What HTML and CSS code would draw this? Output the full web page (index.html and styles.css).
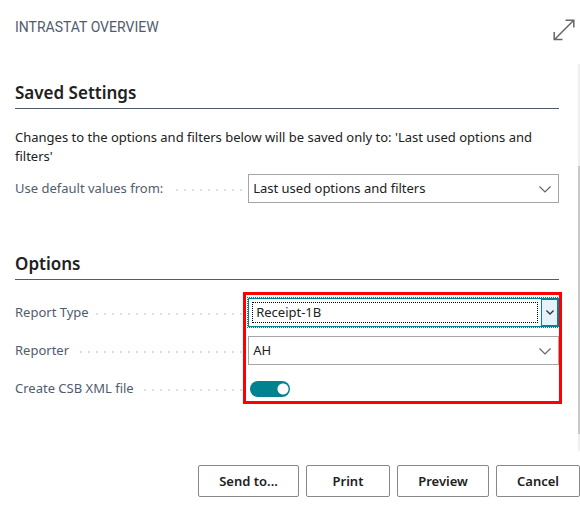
FILE: index.html
```html
<!DOCTYPE html>
<html lang="en">
<head>
<meta charset="utf-8">
<meta name="viewport" content="width=device-width, initial-scale=1">
<title>Intrastat Overview</title>
<link rel="stylesheet" href="styles.css">
</head>
<body>
<main class="dialog">
  <header class="header">
    <h1 class="title">INTRASTAT OVERVIEW</h1>
    <button class="expand" type="button" aria-label="Expand">
      <svg width="22" height="22" viewBox="0 0 22 22" fill="none" stroke="#666" stroke-width="1.5"><path d="M1.5 20.5L20.5 1.5M12.5 1.2H20.8V8.5M1.2 13V20.5H9.5"/></svg>
    </button>
  </header>

  <div class="content">
    <div class="sections">
      <section class="section">
        <h2 class="heading">Saved Settings</h2>
        <p class="note">Changes to the options and filters below will be saved only to: 'Last used options and filters'</p>
        <div class="field">
          <div class="leader"><label class="label" for="defaults">Use default values from:</label></div>
          <div class="control">
            <select class="select" id="defaults"><option>Last used options and filters</option></select>
            <svg class="chevron" width="12" height="7" viewBox="0 0 12 7" fill="none" stroke="#666" stroke-width="1.2"><path d="M.5 .5L6 6L11.500 .5"/></svg>
          </div>
        </div>
      </section>

      <section class="section">
        <h2 class="heading">Options</h2>
        <div class="fields">
          <div class="field">
            <div class="leader"><label class="label" for="type">Report Type</label></div>
            <div class="control active">
              <select class="select" id="type"><option>Receipt-1B</option></select>
              <span class="focus-ring"></span>
              <span class="drop"><svg width="8" height="5" viewBox="0 0 8 5" fill="none" stroke="#333" stroke-width="1.3"><path d="M.4 .5L4 4L7.600 .5"/></svg></span>
            </div>
          </div>
          <div class="field">
            <div class="leader"><label class="label" for="reporter">Reporter</label></div>
            <div class="control">
              <select class="select" id="reporter"><option>AH</option></select>
              <svg class="chevron" width="12" height="7" viewBox="0 0 12 7" fill="none" stroke="#666" stroke-width="1.2"><path d="M.5 .5L6 6L11.500 .5"/></svg>
            </div>
          </div>
          <div class="field">
            <div class="leader"><label class="label" for="xml">Create CSB XML file</label></div>
            <div class="control"><input class="toggle" id="xml" type="checkbox" role="switch" checked></div>
          </div>
          <div class="highlight"></div>
        </div>
      </section>
    </div>
    <div class="track"><div class="thumb"></div></div>
  </div>

  <footer class="actions">
    <button class="button wide" type="button">Send to...</button>
    <button class="button" type="button">Print</button>
    <button class="button medium" type="button">Preview</button>
    <button class="button" type="button">Cancel</button>
  </footer>
</main>
</body>
</html>
```
FILE: styles.css
```css
* {
  box-sizing: border-box;
}

body {
  margin: 0;
  background: #fff;
  color: #212121;
  font: 13px/19px "Noto Sans", "Open Sans", sans-serif;
}

.header {
  display: flex;
  justify-content: space-between;
  align-items: flex-start;
  height: 64px;
  padding: 18px 5px 0 15px;
}

.title {
  margin: 0;
  color: #505c6d;
  font: 400 14px/19px Roboto, sans-serif;
}

.expand {
  width: 22px;
  height: 24px;
  padding: 0;
  border: 0;
  background: none;
}

.expand svg {
  display: block;
}

.content {
  display: flex;
}

.sections {
  flex: 1;
  padding: 16px 19px 48px 15px;
}

.section + .section {
  margin-top: 48px;
}

.heading {
  margin: 0 0 18px;
  padding-bottom: 3px;
  border-bottom: 1px solid #505c6d;
  font-size: 17px;
  line-height: 25px;
  font-weight: 600;
}

.note {
  margin: 19px 0 8px;
}

.fields {
  position: relative;
  display: grid;
  gap: 9px;
}

.field {
  display: grid;
  grid-template-columns: 3fr 4fr;
  align-items: center;
  height: 29px;
}

.leader {
  display: flex;
  align-items: center;
  height: 29px;
  background: repeating-linear-gradient(to right, transparent 0 1px, #ddd 1px 3px, transparent 3px 8px) 0 15px / 232px 2px no-repeat;
}

.label {
  padding-right: 7px;
  background: #fff;
  color: #505c6d;
}

.control {
  position: relative;
  display: flex;
  align-items: center;
  height: 29px;
}

.select {
  appearance: none;
  width: 100%;
  height: 29px;
  padding: 0 32px 0 4px;
  border: 1px solid #a6a6a6;
  border-radius: 0;
  background: #fff;
  color: inherit;
  font: inherit;
}

.chevron {
  position: absolute;
  right: 8px;
  top: 12px;
  pointer-events: none;
}

.active .select {
  padding-left: 7px;
  border-color: #00838f;
  outline: 1px dotted #00838f;
}

.focus-ring {
  position: absolute;
  inset: 4px 21px 4px 4px;
  border: 1px dotted #000;
  pointer-events: none;
}

.drop {
  position: absolute;
  inset: 1px 1px 1px auto;
  display: flex;
  align-items: center;
  justify-content: center;
  width: 17px;
  border: 1px solid #0078d7;
  background: #e5f1fb;
  pointer-events: none;
}

.toggle {
  appearance: none;
  width: 40px;
  height: 16px;
  margin: 0 2px;
  border-radius: 8px;
  background: radial-gradient(circle at 33px 8px, #fff 5px, #00838f 6px);
}

.highlight {
  position: absolute;
  inset: -6px -3px -1px calc(300% / 7 - 5px);
  border: 3px solid #f00;
  pointer-events: none;
}

.track {
  display: flex;
  flex-direction: column;
  width: 2px;
  padding: 102px 0 17px;
  background: #efefef;
}

.thumb {
  flex: 1;
  background: #c8c8c8;
}

.actions {
  display: flex;
  justify-content: flex-end;
  gap: 7px;
  padding: 14px 0 10px;
}

.button {
  min-width: 84px;
  height: 32px;
  padding: 0 8px;
  border: 1px solid #888;
  border-radius: 2px;
  background: #fff;
  color: #212121;
  font: inherit;
  font-weight: 600;
}

.medium {
  min-width: 92px;
}

.wide {
  min-width: 101px;
}
```
